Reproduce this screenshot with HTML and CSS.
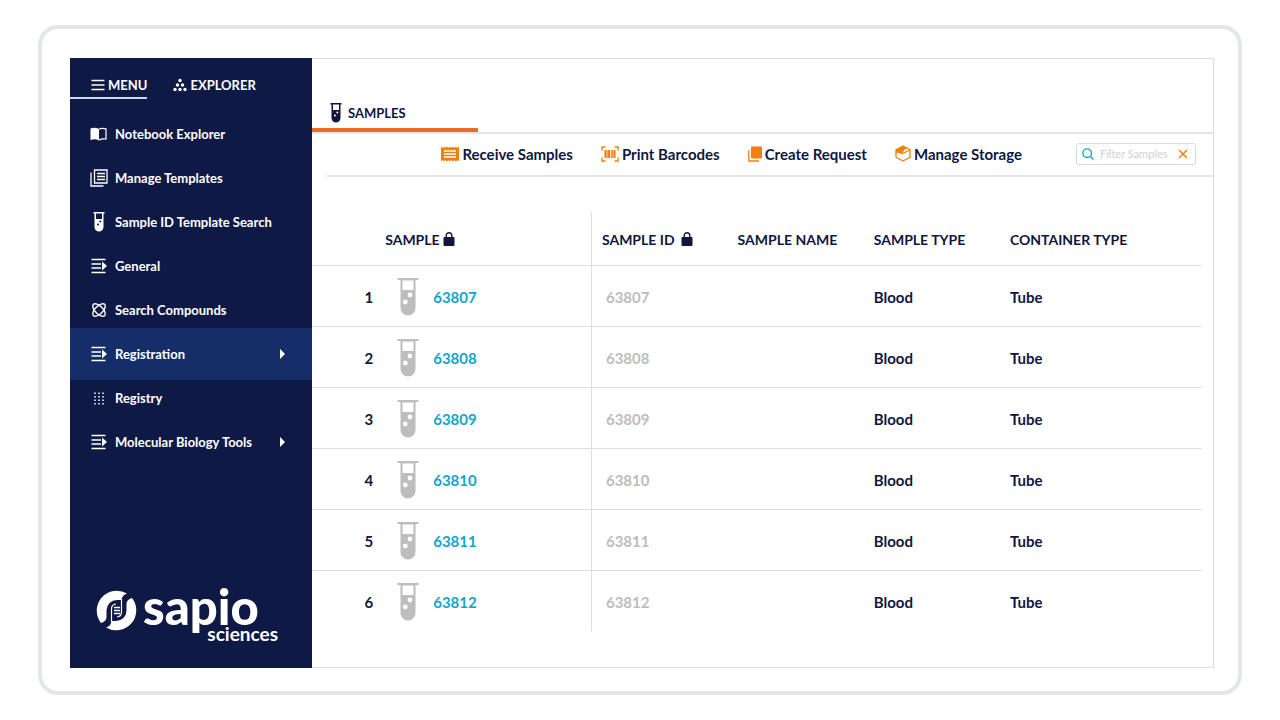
FILE: index.html
```html
<!DOCTYPE html>
<html lang="en">
<head>
    <meta charset="UTF-8">
    <meta name="viewport" content="width=device-width, initial-scale=1.0">
    <title>Sapio Sciences - Samples</title>
    <link rel="stylesheet" href="styles.css">
</head>
<body>
    <!-- Shared icons -->
    <svg class="sprite" aria-hidden="true">
        <symbol id="tube" viewBox="0 0 22 38">
            <path fill="currentColor" fill-rule="evenodd" d="M0.5 0H21.5V2H18.5V30A7.5 7.5 0 0 1 3.5 30V2H0.5ZM5.5 2.5V12H16.5V2.5ZM13 14.6a2.4 2.4 0 1 0 .01 4.8a2.4 2.4 0 1 0-.01-4.8ZM8.3 21.6a2.4 2.4 0 1 0 .01 4.8a2.4 2.4 0 1 0-.01-4.8Z"/>
        </symbol>
        <symbol id="tube-small" viewBox="0 0 12 20">
            <path fill="currentColor" fill-rule="evenodd" d="M0.5 0H11.5V1.5H10.5V15A4.5 4.5 0 0 1 1.5 15V1.5H0.5ZM3 1.5V7H9V1.5ZM7.3 8.5a1 1 0 1 0 .01 2a1 1 0 1 0-.01-2ZM5 11.5a1 1 0 1 0 .01 2a1 1 0 1 0-.01-2Z"/>
        </symbol>
        <symbol id="list-arrow" viewBox="0 0 16 16">
            <path fill="none" stroke="currentColor" stroke-width="1.5" d="M0.5 1.5H14.5M0.5 6H10M0.5 10H10M0.5 14.5H14.5"/>
            <path fill="currentColor" d="M11 3.5L16 8L11 12.5Z"/>
        </symbol>
        <symbol id="lock" viewBox="0 0 12 14">
            <rect x="0.5" y="5" width="11" height="9" rx="1" fill="currentColor"/>
            <path fill="none" stroke="currentColor" stroke-width="1.4" d="M3.2 5.5V3.5A2.8 2.8 0 0 1 8.8 3.5V5.5"/>
        </symbol>
    </svg>

    <div class="device">
        <div class="app">
            <aside class="sidebar">
                <div class="side-tabs">
                    <button type="button" class="side-tab active">
                        <svg width="14" height="12" viewBox="0 0 14 12"><path stroke="currentColor" stroke-width="1.3" d="M0.5 1.5H13.5M0.5 6H13.5M0.5 10.5H13.5"/></svg>
                        MENU
                    </button>
                    <button type="button" class="side-tab">
                        <svg width="14" height="14" viewBox="0 0 14 14" fill="currentColor"><circle cx="7" cy="2.5" r="1.7"/><circle cx="4.5" cy="7" r="1.7"/><circle cx="9.5" cy="7" r="1.7"/><circle cx="2" cy="11.5" r="1.7"/><circle cx="7" cy="11.5" r="1.7"/><circle cx="12" cy="11.5" r="1.7"/></svg>
                        EXPLORER
                    </button>
                </div>

                <nav>
                    <ul class="menu">
                        <li><a href="#">
                            <svg width="18" height="16" viewBox="0 0 18 16"><path fill="currentColor" d="M0.5 2.5Q5 1 9 3V14.5Q5 12.5 0.5 14Z"/><path fill="none" stroke="currentColor" stroke-width="1.2" d="M9 3Q12 1.8 16 2.8V13Q12 12.3 9 14"/></svg>
                            Notebook Explorer
                        </a></li>
                        <li><a href="#">
                            <svg width="18" height="18" viewBox="0 0 18 18"><path fill="none" stroke="currentColor" stroke-width="1.3" d="M4.5 1H17V14H4.5ZM1 3.5V17H13.5M7 4.5H15M7 7.5H15M7 10.5H15"/></svg>
                            Manage Templates
                        </a></li>
                        <li><a href="#">
                            <svg width="12" height="20"><use href="#tube-small"/></svg>
                            Sample ID Template Search
                        </a></li>
                        <li><a href="#">
                            <svg width="16" height="16"><use href="#list-arrow"/></svg>
                            General
                        </a></li>
                        <li><a href="#">
                            <svg width="14" height="14" viewBox="0 0 14 14" fill="none" stroke="currentColor" stroke-width="1.4"><ellipse cx="7" cy="7" rx="8" ry="3.8" transform="rotate(45 7 7)"/><ellipse cx="7" cy="7" rx="8" ry="3.8" transform="rotate(-45 7 7)"/></svg>
                            Search Compounds
                        </a></li>
                        <li class="active"><a href="#">
                            <svg width="16" height="16"><use href="#list-arrow"/></svg>
                            Registration
                            <span class="caret"></span>
                        </a></li>
                        <li><a href="#">
                            <svg width="10" height="13" viewBox="0 0 10 13"><path stroke="currentColor" stroke-width="1.5" stroke-dasharray="1.5 2" d="M1 0.5V13M5 0.5V13M9 0.5V13"/></svg>
                            Registry
                        </a></li>
                        <li><a href="#">
                            <svg width="16" height="16"><use href="#list-arrow"/></svg>
                            Molecular Biology Tools
                            <span class="caret"></span>
                        </a></li>
                    </ul>
                </nav>

                <div class="brand">
                    <svg width="41" height="41" viewBox="0 0 41 41">
                        <path fill="#fff" d="M5 33A20 20 0 0 1 31 3.5Q26 5 25.5 10H21A10.5 10.5 0 0 0 10.5 20.5V27Q10.5 31.5 5 33Z"/>
                        <path fill="#fff" d="M36 8A20 20 0 0 1 10 37.5Q15 36 15.5 31H20A10.5 10.5 0 0 0 30.5 20.5V14Q30.5 9.5 36 8Z"/>
                        <path fill="none" stroke="#fff" stroke-width="1.2" d="M15.5 32V19Q15.5 14.5 20 14M25.5 9V22Q25.5 26.5 21 27"/>
                        <path stroke="#fff" stroke-width="1.6" d="M18 17.5H24M18 20.5H24M18 23.5H24"/>
                    </svg>
                    <div class="wordmark">
                        <span class="name">sapio</span>
                        <span class="sub">sciences</span>
                    </div>
                </div>
            </aside>

            <main>
                <header class="tabs">
                    <a href="#" class="tab">
                        <svg width="12" height="20"><use href="#tube-small"/></svg>
                        SAMPLES
                    </a>
                </header>

                <div class="toolbar">
                    <button type="button">
                        <svg width="18" height="16" viewBox="0 0 18 16"><path fill="#f08010" d="M0 0.5L1.5 2L3 0.5L4.5 2L6 0.5L7.5 2L9 0.5L10.5 2L12 0.5L13.5 2L15 0.5L16.5 2L18 0.5V15.5L16.5 14L15 15.5L13.5 14L12 15.5L10.5 14L9 15.5L7.5 14L6 15.5L4.5 14L3 15.5L1.5 14L0 15.5Z"/><path stroke="#fff" stroke-width="1.3" d="M3 5H15M3 8H15M3 11H15"/></svg>
                        Receive Samples
                    </button>
                    <button type="button">
                        <svg width="18" height="16" viewBox="0 0 18 16" fill="none" stroke="#f08010"><path stroke-width="1.4" d="M4.5 1H1V4.5M13.5 1H17V4.5M4.5 15H1V11.5M13.5 15H17V11.5"/><path stroke-width="2" d="M4.5 4V12M8 4V12M13.5 4V12"/><path d="M6.2 4V12M10.3 4V12M11.7 4V12"/></svg>
                        Print Barcodes
                    </button>
                    <button type="button">
                        <svg width="14" height="16" viewBox="0 0 14 16"><rect x="3" y="0.5" width="11" height="12" rx="1" fill="#f08010"/><path fill="none" stroke="#f08010" stroke-width="1.3" d="M0.8 4V15H11"/></svg>
                        Create Request
                    </button>
                    <button type="button">
                        <svg width="16" height="17" viewBox="0 0 16 17"><path fill="none" stroke="#f08010" stroke-width="1.3" stroke-linejoin="round" d="M8 1L15 4.8V12.2L8 16L1 12.2V4.8Z"/><path fill="#f08010" d="M8 1L1 4.8V7.5L7.5 9L9 5L12 3.2Z"/><path fill="none" stroke="#f08010" stroke-width="1.2" d="M7 9L15 4.8"/></svg>
                        Manage Storage
                    </button>
                    <div class="filter">
                        <svg width="12" height="12" viewBox="0 0 12 12" fill="none" stroke="#14a5cc" stroke-width="1.4"><circle cx="5.2" cy="5.2" r="4.3"/><path d="M8.3 8.3L11.5 11.5"/></svg>
                        <input type="text" placeholder="Filter Samples" aria-label="Filter Samples">
                        <button type="button" aria-label="Clear">
                            <svg width="10" height="10" viewBox="0 0 10 10"><path stroke="#f08010" stroke-width="1.5" d="M1 1L9 9M9 1L1 9"/></svg>
                        </button>
                    </div>
                </div>

                <table class="samples">
                    <colgroup>
                        <col class="col-num">
                        <col class="col-sample">
                        <col class="col-id">
                        <col class="col-name">
                        <col class="col-type">
                        <col>
                    </colgroup>
                    <thead>
                        <tr>
                            <th></th>
                            <th class="sample">SAMPLE <svg width="12" height="14"><use href="#lock"/></svg></th>
                            <th>SAMPLE ID &nbsp;<svg width="12" height="14"><use href="#lock"/></svg></th>
                            <th>SAMPLE NAME</th>
                            <th>SAMPLE TYPE</th>
                            <th>CONTAINER TYPE</th>
                        </tr>
                    </thead>
                    <tbody>
                        <tr>
                            <td class="num">1</td>
                            <td class="sample"><a href="#"><svg width="22" height="38"><use href="#tube"/></svg>63807</a></td>
                            <td class="id">63807</td>
                            <td></td>
                            <td>Blood</td>
                            <td>Tube</td>
                        </tr>
                        <tr>
                            <td class="num">2</td>
                            <td class="sample"><a href="#"><svg width="22" height="38"><use href="#tube"/></svg>63808</a></td>
                            <td class="id">63808</td>
                            <td></td>
                            <td>Blood</td>
                            <td>Tube</td>
                        </tr>
                        <tr>
                            <td class="num">3</td>
                            <td class="sample"><a href="#"><svg width="22" height="38"><use href="#tube"/></svg>63809</a></td>
                            <td class="id">63809</td>
                            <td></td>
                            <td>Blood</td>
                            <td>Tube</td>
                        </tr>
                        <tr>
                            <td class="num">4</td>
                            <td class="sample"><a href="#"><svg width="22" height="38"><use href="#tube"/></svg>63810</a></td>
                            <td class="id">63810</td>
                            <td></td>
                            <td>Blood</td>
                            <td>Tube</td>
                        </tr>
                        <tr>
                            <td class="num">5</td>
                            <td class="sample"><a href="#"><svg width="22" height="38"><use href="#tube"/></svg>63811</a></td>
                            <td class="id">63811</td>
                            <td></td>
                            <td>Blood</td>
                            <td>Tube</td>
                        </tr>
                        <tr>
                            <td class="num">6</td>
                            <td class="sample"><a href="#"><svg width="22" height="38"><use href="#tube"/></svg>63812</a></td>
                            <td class="id">63812</td>
                            <td></td>
                            <td>Blood</td>
                            <td>Tube</td>
                        </tr>
                    </tbody>
                </table>
            </main>
        </div>
    </div>
</body>
</html>
```
FILE: styles.css
```css
* {
    box-sizing: border-box;
}
body {
    margin: 0;
    padding: 25px 38px;
    background-color: #fff;
    color: #0f1740;
    font-family: Lato, "Liberation Sans", sans-serif;
    font-size: 15px;
    font-weight: 700;
}
a {
    color: inherit;
    text-decoration: none;
}
button {
    background: none;
    border: none;
    padding: 0;
    color: inherit;
    font: inherit;
    cursor: pointer;
}
svg {
    flex: none;
}
.sprite {
    display: none;
}
/*Rounded frame around the app*/
.device {
    display: flex;
    min-height: calc(100vh - 50px);
    padding: 29px 24px 23px 28px;
    border: 4px solid #e2e6e5;
    border-radius: 20px;
}
.app {
    display: flex;
    flex: 1;
    border: 1px solid #dcdde0;
    border-left: none;
}
/*Sidebar*/
.sidebar {
    display: flex;
    flex-direction: column;
    width: 242px;
    margin: -1px 0;
    background-color: #0f1945;
    color: #fff;
    font-size: 13px;
}
.side-tabs {
    display: flex;
    gap: 26px;
    margin-bottom: 13px;
}
.side-tab {
    display: flex;
    align-items: center;
    gap: 3px;
    height: 41px;
    padding-top: 14px;
    border-bottom: 2px solid transparent;
}
.side-tab.active {
    padding-left: 21px;
    border-bottom-color: #cfd8f2;
}
.menu {
    list-style: none;
    margin: 0;
    padding: 0;
}
.menu a {
    display: grid;
    grid-template-columns: 18px 1fr 6px;
    column-gap: 7px;
    align-items: center;
    height: 44px;
    padding: 0 26px 0 20px;
    white-space: nowrap;
}
.menu svg {
    justify-self: center;
    overflow: visible;
}
.menu .active {
    margin: -4px 0;
    padding: 4px 0;
    background-color: #152d69;
}
.caret {
    border: solid transparent;
    border-width: 5px 0 5px 5px;
    border-left-color: #fff;
}
.brand {
    display: flex;
    align-items: flex-start;
    gap: 6px;
    margin-top: auto;
    padding: 0 34px 24px 26px;
}
.brand > svg {
    margin-top: 8px;
}
.wordmark {
    display: flex;
    flex: 1;
    flex-direction: column;
}
.wordmark .name {
    font-size: 49px;
    font-weight: 900;
    line-height: 48px;
}
.wordmark .sub {
    align-self: flex-end;
    margin-top: -6px;
    font-size: 19px;
    line-height: 20px;
}
/*Main area*/
main {
    flex: 1;
    min-width: 0;
}
.tabs {
    display: flex;
    align-items: flex-end;
    height: 75px;
    border-bottom: 2px solid #e4e4e6;
}
.tab {
    display: flex;
    align-items: center;
    gap: 6px;
    width: 166px;
    height: 35px;
    padding-left: 18px;
    border-bottom: 4px solid #ec6d1f;
    font-size: 13px;
}
.toolbar {
    display: flex;
    justify-content: flex-end;
    align-items: center;
    gap: 28px;
    height: 43px;
    margin-left: 15px;
    padding-right: 17px;
    padding-bottom: 2px;
    border-bottom: 2px solid #e4e4e6;
}
.toolbar button {
    display: flex;
    align-items: center;
    gap: 3px;
}
.filter {
    display: flex;
    align-items: center;
    gap: 6px;
    width: 120px;
    height: 22px;
    margin-left: 26px;
    padding: 0 7px 0 5px;
    border: 1px solid #d8d9dc;
    border-radius: 3px;
}
.filter input {
    flex: 1;
    min-width: 0;
    border: none;
    outline: none;
    padding: 0;
    font: inherit;
    font-size: 11px;
    font-weight: 400;
}
.filter input::placeholder {
    color: #cfd0d3;
}
/*Samples table*/
.samples {
    width: calc(100% - 11px);
    margin-top: 35px;
    border-collapse: collapse;
    table-layout: fixed;
}
.col-num {
    width: 8%;
}
.col-sample {
    width: 23.4%;
}
.col-id,
.col-name,
.col-type {
    width: 15.3%;
}
.samples th,
.samples td {
    padding: 2px 0 0 10px;
    text-align: left;
    white-space: nowrap;
}
.samples th {
    height: 53px;
    font-size: 14px;
}
.samples td {
    height: 61px;
}
.samples tr {
    border-bottom: 1px solid #dcdde0;
}
.samples tbody tr:last-child {
    border-bottom: none;
}
.samples .sample {
    border-right: 1px solid #dcdde0;
}
.samples th.sample {
    padding-left: 2px;
}
.samples th svg {
    vertical-align: -1px;
}
.samples .num {
    padding-right: 10px;
    text-align: right;
}
.samples td.sample {
    padding-left: 14px;
}
.samples .sample a {
    display: flex;
    align-items: center;
    gap: 14px;
    color: #14a5cc;
}
.samples .sample a svg {
    color: #bdbdbd;
}
.samples td.id {
    padding-left: 14px;
    color: #bdbdbd;
}
```
